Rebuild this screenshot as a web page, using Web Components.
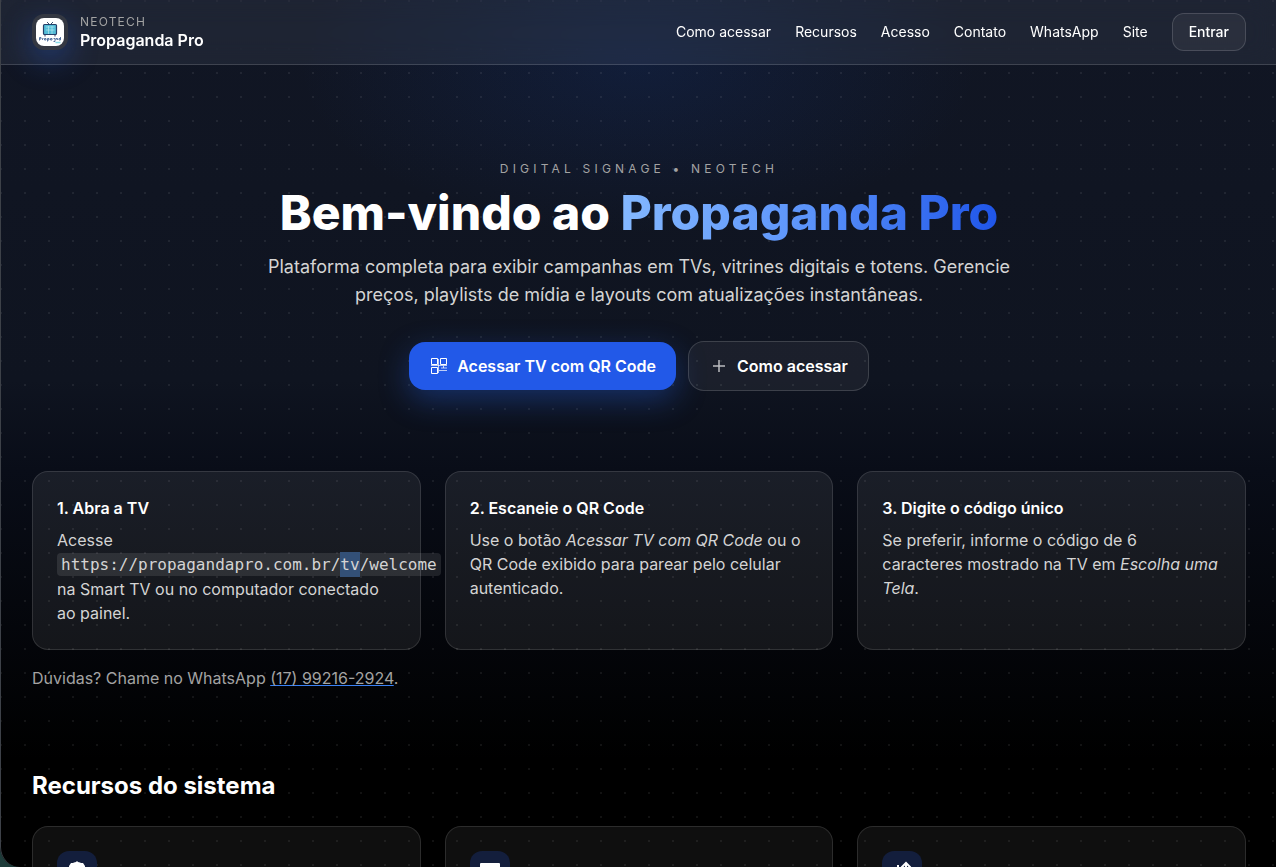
<!DOCTYPE html>
<html lang="pt-BR">
<head>
<meta charset="utf-8">
<meta name="viewport" content="width=device-width, initial-scale=1">
<title>Propaganda Pro</title>
<style>
    html{
        background: #000;
        scrollbar-width: none;
    }

    body{
        margin: 0;
        font-family: Inter, "Liberation Sans", sans-serif;
        font-size: 16px;
        line-height: 24px;
        color: #fff;
    }
</style>
</head>
<body>
<welcome-page></welcome-page>

<script>
//BASE ELEMENT: CLONES THE TEMPLATE OF EACH CLASS INTO ITS SHADOW ROOT
class BaseElement extends HTMLElement{
    constructor(){
        super();
        const template = document.createElement('template');
        template.innerHTML = this.constructor.html;
        this.attachShadow({mode: 'open'});
        this.shadowRoot.appendChild(template.content.cloneNode(true));
    }
}

//LOGO: SMALL TV WITH THE NAME UNDER IT
class BrandLogo extends BaseElement{
    static html = `
    <style>
    :host{
        display: block;
        box-sizing: border-box;
        width: 36px;
        height: 36px;
        padding: 4px;
        border-radius: 12px;
        background: #343842;
        box-shadow: 0 10px 30px rgba(37,99,235,0.35);
    }

    svg{
        display: block;
        border-radius: 8px;
        background: #fff;
    }
    </style>
    <svg width="28" height="28" viewBox="0 0 28 28" fill="none" aria-hidden="true">
        <path d="M11 4l3 3 3-3" stroke="#38506f" stroke-width="1"/>
        <rect x="7.5" y="6.5" width="13" height="10" rx="1" fill="#54bdd8" stroke="#263f68" stroke-width="1.2"/>
        <path d="M10 9h8.500M10 12h8.500M12.500 8v8M16 8v8" stroke="#b5e6ef" stroke-width="0.7"/>
        <path d="M9 17v1.500M19 17v1.500" stroke="#263f68"/>
        <path d="M3.500 19.500v3M3.500 19.500h1.500v1.500h-1.500M6.500 22v-1.500h1M8.500 20.500h1.500v1.500h-1.500zM11.500 23.500v-3h1.500v1.500h-1.500M14.500 20.500h1.500v1.500h-1.500zM17.500 20.500h1.500v3h-1.500M20 22v-1.500h1.500V22M24.500 19v3h-1.500v-1.500h1.500" stroke="#35598d" stroke-width="0.8"/>
        <path d="M19.500 24.500h5" stroke="#8adce8" stroke-width="1.500"/>
    </svg>
    `;
}

class SiteHeader extends BaseElement{
    static html = `
    <style>
    :host{
        display: block;
        position: sticky;
        top: 0;
        z-index: 2;
        border-bottom: 1px solid rgba(255,255,255,0.15);
        background: rgba(210,225,255,0.07);
        backdrop-filter: blur(12px);
    }

    header, nav, .brand{
        display: flex;
        align-items: center;
    }

    header{
        justify-content: space-between;
        padding: 13px 30px 13px 32px;
    }

    .brand{
        gap: 12px;
        color: #fff;
        text-decoration: none;
    }

    .brand brand-logo{
        flex: none;
    }

    .brand small, .brand strong{
        display: block;
    }

    .brand small{
        font-size: 12px;
        line-height: 16px;
        letter-spacing: 0.1em;
        color: #a3a3a3;
    }

    .brand strong{
        font-weight: 600;
        line-height: 20px;
    }

    nav{
        gap: 24px;
        font-size: 14px;
        font-weight: 400;
        line-height: 20px;
    }

    nav a{
        color: #fff;
        text-decoration: none;
    }

    .enter{
        padding: 8px 16px;
        border: 1px solid rgba(255,255,255,0.15);
        border-radius: 12px;
        background: rgba(255,255,255,0.05);
        font-weight: 500;
    }
    </style>
    <header>
        <a class="brand" href="#">
            <brand-logo></brand-logo>
            <span><small>NEOTECH</small><strong>Propaganda Pro</strong></span>
        </a>
        <nav>
            <a href="#como">Como acessar</a>
            <a href="#recursos">Recursos</a>
            <a href="#acesso">Acesso</a>
            <a href="#contato">Contato</a>
            <a href="#whatsapp">WhatsApp</a>
            <a href="#site">Site</a>
            <a class="enter" href="#entrar">Entrar</a>
        </nav>
    </header>
    `;
}

//BUTTON LINK, "primary" ATTRIBUTE GIVES THE BLUE ONE
class ActionLink extends BaseElement{
    static html = `
    <style>
    :host{
        display: block;
    }

    a{
        display: flex;
        align-items: center;
        gap: 8px;
        padding: 12px 20px;
        border: 1px solid rgba(255,255,255,0.15);
        border-radius: 16px;
        background: rgba(255,255,255,0.05);
        color: #fff;
        font-weight: 600;
        text-decoration: none;
    }

    :host([primary]) a{
        border: 0;
        background: #2259e8;
        box-shadow: 0 10px 30px rgba(37,99,235,0.35);
    }
    </style>
    <a><slot name="icon"></slot><slot></slot></a>
    `;

    connectedCallback(){
        this.shadowRoot.querySelector('a').href = this.getAttribute('to');
    }
}

class WelcomeHero extends BaseElement{
    static html = `
    <style>
    :host{
        display: block;
        padding: 96px 30px 80px 32px;
        text-align: center;
    }

    .eyebrow{
        margin: 0;
        font-size: 12px;
        line-height: 16px;
        letter-spacing: 0.35em;
        color: #a3a3a3;
    }

    h1{
        margin: 8px 0 0;
        font-size: 48px;
        font-weight: 800;
        line-height: 56px;
    }

    h1 span{
        background: linear-gradient(to right, #84b8ff, #5b93fa 50%, #1f55e8);
        -webkit-background-clip: text;
        background-clip: text;
        color: transparent;
    }

    .lead{
        max-width: 768px;
        margin: 12px auto 0;
        font-size: 18px;
        line-height: 28px;
        color: #d4d4d4;
    }

    .actions{
        display: flex;
        flex-wrap: wrap;
        justify-content: center;
        align-items: center;
        gap: 12px;
        margin-top: 32px;
    }
    </style>
    <p class="eyebrow">DIGITAL SIGNAGE • NEOTECH</p>
    <h1>Bem-vindo ao <span>Propaganda Pro</span></h1>
    <p class="lead">Plataforma completa para exibir campanhas em TVs, vitrines digitais e totens. Gerencie preços, playlists de mídia e layouts com atualizações instantâneas.</p>
    <div class="actions">
        <action-link primary to="#qr">
            <svg slot="icon" width="20" height="20" viewBox="0 0 20 20" fill="none" stroke="#fff" aria-hidden="true">
                <path d="M2.500 2.500h6v6h-6zM11.500 2.500h6v6h-6zM2.500 11.500h6v6h-6z"/>
                <path d="M2 9.500h8M9.500 3v14M10 9.500h8M14.500 10v2M10 14.500h8M12 12h6" stroke-opacity="0.7"/>
            </svg>
            Acessar TV com QR Code
        </action-link>
        <action-link to="#como">
            <svg slot="icon" width="20" height="20" viewBox="0 0 20 20" fill="none" stroke="#fff" stroke-opacity="0.7" stroke-width="1.500" aria-hidden="true">
                <path d="M10 4v12M4 10h12"/>
            </svg>
            Como acessar
        </action-link>
    </div>
    `;
}

class StepCard extends BaseElement{
    static html = `
    <style>
    :host{
        display: block;
        box-sizing: border-box;
        min-width: 0;
        padding: 24px;
        border: 1px solid rgba(255,255,255,0.12);
        border-radius: 16px;
        background: rgba(255,255,255,0.07);
    }

    h3{
        margin: 0 0 8px;
        font-size: 16px;
        font-weight: 600;
    }

    p{
        margin: 0;
        color: #d4d4d4;
    }
    </style>
    <h3><slot name="title"></slot></h3>
    <p><slot></slot></p>
    `;
}

//CODE TEXT WITH A SELECTED PART
class CodeText extends BaseElement{
    static html = `
    <style>
    :host{
        display: inline;
    }

    code{
        padding: 2px 4px;
        border-radius: 4px;
        background: rgba(255,255,255,0.1);
        font-family: "DejaVu Sans Mono", monospace;
        white-space: nowrap;
    }

    ::slotted(mark){
        padding: 3px 0;
        background: #335077;
        color: inherit;
    }
    </style>
    <code><slot></slot></code>
    `;
}

class FeatureCard extends BaseElement{
    static html = `
    <style>
    :host{
        display: block;
        padding: 24px;
        border: 1px solid rgba(255,255,255,0.12);
        border-radius: 16px;
        background: rgba(255,255,255,0.06);
    }

    div{
        display: flex;
        align-items: center;
        justify-content: center;
        width: 40px;
        height: 40px;
        border-radius: 12px;
        background: #131e3c;
    }
    </style>
    <div><slot></slot></div>
    `;
}

class WelcomePage extends BaseElement{
    static html = `
    <style>
    :host{
        display: block;
        min-height: 100vh;
        background:
            radial-gradient(circle at 1px 1px, rgba(255,255,255,0.07) 1px, transparent 1px) 0 0 / 24px 24px,
            radial-gradient(340px 170px at 50% 64px, rgba(24,78,190,0.14), transparent),
            linear-gradient(to bottom, #111624 0, #0f1420 380px, #090d18 470px, #000 760px);
    }

    section{
        padding: 0 30px 0 32px;
    }

    .cards{
        display: grid;
        grid-template-columns: repeat(3, minmax(0, 1fr));
        gap: 24px;
    }

    .help{
        margin: 16px 0 0;
        color: #a3a3a3;
    }

    .help a{
        color: inherit;
        text-decoration-color: #3b82f6;
    }

    .features{
        padding-top: 80px;
        padding-bottom: 64px;
    }

    h2{
        margin: 0 0 24px;
        font-size: 24px;
        font-weight: 700;
        line-height: 32px;
    }

    /* window edge, with the desktop behind its corner */
    .edge{
        position: fixed;
        inset: 0;
        z-index: 3;
        border-left: 1px solid #3d4148;
        border-bottom-left-radius: 20px;
        box-shadow: 0 0 0 20px #1d3b39;
        pointer-events: none;
    }

    @media (max-width: 800px){
        .cards{
            grid-template-columns: minmax(0, 1fr);
        }
    }
    </style>
    <site-header></site-header>
    <main>
        <welcome-hero></welcome-hero>
        <section id="como">
            <div class="cards">
                <step-card><span slot="title">1. Abra a TV</span>Acesse <code-text>https://propagandapro.com.br/<mark>tv</mark>/welcome</code-text> na Smart TV ou no computador conectado ao painel.</step-card>
                <step-card><span slot="title">2. Escaneie o QR Code</span>Use o botão <em>Acessar TV com QR Code</em> ou o QR Code exibido para parear pelo celular autenticado.</step-card>
                <step-card><span slot="title">3. Digite o código único</span>Se preferir, informe o código de 6 caracteres mostrado na TV em <em>Escolha uma Tela</em>.</step-card>
            </div>
            <p class="help">Dúvidas? Chame no WhatsApp <a href="#whatsapp">(17) 99216-2924</a>.</p>
        </section>
        <section class="features" id="recursos">
            <h2>Recursos do sistema</h2>
            <div class="cards">
                <feature-card>
                    <svg width="20" height="20" viewBox="0 0 20 20" fill="#fff" aria-hidden="true"><path d="M7 1.500l2-.5 1-1 1 1 2 .5 1 .5h2l2 3v10l-3 4H5l-3-4V5l2-3h2z"/></svg>
                </feature-card>
                <feature-card>
                    <svg width="20" height="20" viewBox="0 0 20 20" fill="#fff" aria-hidden="true"><rect y="2" width="20" height="13" rx="1"/><path d="M6 17h8v2H6z"/></svg>
                </feature-card>
                <feature-card>
                    <svg width="20" height="20" viewBox="0 0 20 20" fill="none" stroke="#fff" stroke-width="2" aria-hidden="true"><path d="M14 19V2M9.500 6.500l4.500-4.500 4.500 4.500M6 4v12"/></svg>
                </feature-card>
            </div>
        </section>
    </main>
    <div class="edge"></div>
    `;
}

window.customElements.define('brand-logo', BrandLogo);
window.customElements.define('site-header', SiteHeader);
window.customElements.define('action-link', ActionLink);
window.customElements.define('welcome-hero', WelcomeHero);
window.customElements.define('step-card', StepCard);
window.customElements.define('code-text', CodeText);
window.customElements.define('feature-card', FeatureCard);
window.customElements.define('welcome-page', WelcomePage);
</script>
</body>
</html>
